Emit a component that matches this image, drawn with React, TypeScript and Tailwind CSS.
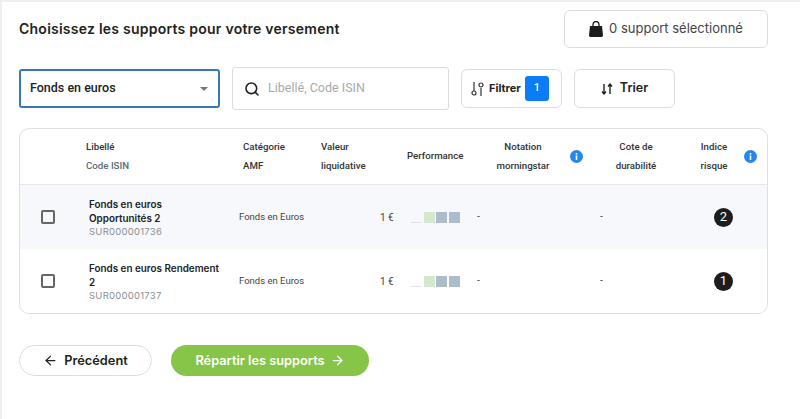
import { ArrowLeft, ArrowRight, Search } from "lucide-react";

const title = "font-['Inter','Liberation_Sans',sans-serif]";
const body = "font-['Roboto','Liberation_Sans',sans-serif]";

function InfoDot() {
  return (
    <svg width="13" height="13" viewBox="0 0 13 13" className="shrink-0">
      <circle cx="6.5" cy="6.5" r="6.5" fill="#2787e8" />
      <rect x="5.7" y="5.5" width="1.6" height="4.4" fill="#fff" />
      <rect x="5.7" y="3" width="1.6" height="1.6" fill="#fff" />
    </svg>
  );
}

function Bars() {
  return (
    <div className="flex w-[66px] items-end gap-[1.5px]">
      <span className="h-[1px] w-[11px] bg-[#dfe3e8]" />
      <span className="h-[11px] w-[11px] bg-[#d5e8cd]" />
      <span className="h-[11px] w-[11px] bg-[#adbccb]" />
      <span className="h-[11px] w-[11px] bg-[#adbccb]" />
    </div>
  );
}

function Row({ name, code, risk, shaded }: { name: string[]; code: string; risk: string; shaded?: boolean }) {
  return (
    <div className={`flex h-[64px] items-center ${shaded ? "bg-[#f7f8fb]" : "bg-white"}`}>
      <span className="ml-[21px] h-[14px] w-[14px] rounded-[2px] border-2 border-[#666]" />
      <div className="ml-[34px] w-[150px]">
        <div className={`${title} text-[9.9px] leading-[14px] font-semibold text-[#222]`}>
          {name.map((line) => (
            <div key={line}>{line}</div>
          ))}
        </div>
        <div className={`${title} text-[9.5px] leading-[13px] tracking-[0.25px] text-[#8a8f94]`}>{code}</div>
      </div>
      <div className={`${body} w-[141px] text-[9.5px] text-[#444]`}>Fonds en Euros</div>
      <div className={`${body} w-[31px] text-[10px] text-[#444]`}>1 €</div>
      <Bars />
      <div className={`${body} w-[123px] text-[10.5px] text-[#555]`}>-</div>
      <div className={`${body} w-[114px] text-[10.5px] text-[#555]`}>-</div>
      <span className={`${body} flex h-[19px] w-[19px] items-center justify-center rounded-full bg-[#1d1d1d] text-[13px] text-white`}>
        {risk}
      </span>
    </div>
  );
}

export default function App() {
  return (
    <div className="h-[419px] w-[800px] overflow-hidden border-t-2 border-l-2 border-[#eeeeee] bg-white">
      <div className="ml-[17px] w-[749px]">
        <div className="mt-[8px] flex h-[38px] items-center justify-between">
          <h1 className={`${title} -mt-[2px] text-[14px] font-semibold tracking-[0.24px] text-[#222]`}>
            Choisissez les supports pour votre versement
          </h1>
          <div className="flex h-[38px] w-[204px] items-center justify-center gap-[6px] rounded-[6px] border border-[#dddddd]">
            <svg width="14" height="16" viewBox="0 0 14 16">
              <path d="M1 5h12l1 9.5a1.4 1.4 0 0 1-1.4 1.5H1.4A1.4 1.4 0 0 1 0 14.500Z" fill="#1d1d1d" />
              <path d="M4 6V3.500a3 3 0 0 1 6 0V6" fill="none" stroke="#1d1d1d" strokeWidth="1.300" />
            </svg>
            <span className={`${title} text-[13px] text-[#444]`}>0 support sélectionné</span>
          </div>
        </div>

        <div className="mt-[19px] flex items-center">
          <div className="flex h-[39px] w-[201px] items-center justify-between rounded-[3px] border-2 border-[#3a78b5] pr-[10px] pl-[9px]">
            <span className={`${body} text-[12.5px] font-medium text-[#222]`}>Fonds en euros</span>
            <span className="h-0 w-0 border-x-[4px] border-t-[4px] border-x-transparent border-t-[#777]" />
          </div>
          <div className="ml-[12px] flex h-[43px] w-[217px] items-center rounded-[3px] border border-[#dcdcdc] pl-[11px]">
            <Search size={16} strokeWidth={2.4} className="text-[#222]" />
            <span className={`${body} ml-[8px] text-[12.5px] text-[#aaaaaa]`}>Libellé, Code ISIN</span>
          </div>
          <div className="ml-[12px] flex h-[39px] w-[101px] items-center rounded-[6px] border border-[#dddddd] pl-[9px]">
            <svg width="13" height="16" viewBox="0 0 13 16" fill="none" stroke="#333" strokeWidth="1.200">
              <path d="M3 1v9M10 7v8" />
              <circle cx="3" cy="12" r="2" />
              <circle cx="10" cy="4" r="2" />
            </svg>
            <span className={`${title} ml-[5px] text-[11px] font-bold text-[#222]`}>Filtrer</span>
            <span className={`${body} ml-[4px] flex h-[25px] w-[24px] items-center justify-center rounded-[3px] bg-[#0a7cf5] text-[11px] font-medium text-white`}>
              1
            </span>
          </div>
          <div className="ml-[12px] flex h-[39px] w-[101px] items-center justify-center gap-[7px] rounded-[6px] border border-[#dddddd]">
            <svg width="12" height="12" viewBox="0 0 12 12" fill="none" stroke="#222" strokeWidth="1.400">
              <path d="M3 1v9.500M1 8.500l2 2.500 2-2.500M9 11V1.500M7 3.500l2-2.500 2 2.500" />
            </svg>
            <span className={`${title} text-[12.5px] font-semibold text-[#222]`}>Trier</span>
          </div>
        </div>

        <div className="mt-[18px] h-[186px] overflow-hidden rounded-[10px] border border-[#dfdfdf]">
          <div className={`${body} flex h-[56px] items-center border-b border-[#e8e8e8] text-[9.7px] leading-[18.500px] font-medium text-[#333]`}>
            <div className="ml-[66px] w-[157px]">
              <div>Libellé</div>
              <div className="text-[#5b6b75]">Code ISIN</div>
            </div>
            <div className="w-[78px]">
              Catégorie
              <br />
              AMF
            </div>
            <div className="w-[86px]">
              Valeur
              <br />
              liquidative
            </div>
            <div className="w-[70px]">Performance</div>
            <div className="w-[92px] text-center">
              Notation
              <br />
              morningstar
            </div>
            <div className="ml-[1px]">
              <InfoDot />
            </div>
            <div className="ml-[7px] w-[92px] text-center">
              Cote de
              <br />
              durabilité
            </div>
            <div className="ml-[7px] w-[50px] text-center">
              Indice
              <br />
              risque
            </div>
            <div className="ml-[5px]">
              <InfoDot />
            </div>
          </div>
          <Row shaded name={["Fonds en euros", "Opportunités 2"]} code="SUR000001736" risk="2" />
          <Row name={["Fonds en euros Rendement", "2"]} code="SUR000001737" risk="1" />
        </div>

        <div className="mt-[31px] flex items-center gap-[19px]">
          <div className="flex h-[31px] w-[133px] items-center justify-center gap-[6px] rounded-full border border-[#dddddd]">
            <ArrowLeft size={15} className="text-[#222]" />
            <span className={`${title} text-[12.8px] font-semibold text-[#222]`}>Précédent</span>
          </div>
          <div className="flex h-[31px] w-[198px] items-center justify-center gap-[5px] rounded-full bg-[#86c548]">
            <span className={`${title} text-[12.8px] font-semibold text-white`}>Répartir les supports</span>
            <ArrowRight size={15} className="text-white" />
          </div>
        </div>
      </div>
    </div>
  );
}
